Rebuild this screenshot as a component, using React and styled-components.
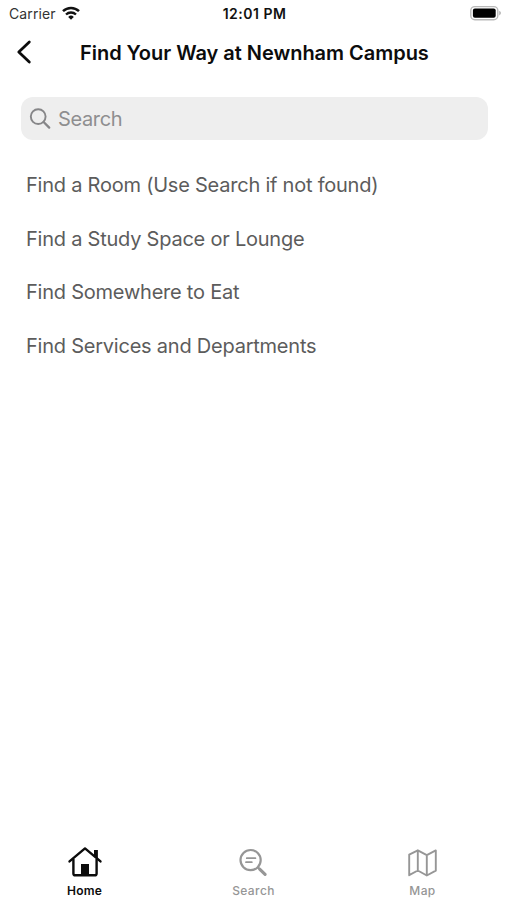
import React from "react";
import styled, { createGlobalStyle } from "styled-components";

const GlobalStyle = createGlobalStyle`
  body {
    margin: 0;
    background: #ffffff;
    font-family: Inter, "Liberation Sans", sans-serif;
  }
`;

const Screen = styled.div`
  display: flex;
  flex-direction: column;
  width: 507px;
  height: 900px;
  overflow: hidden;
  background: #ffffff;
`;

const Icon = styled.svg`
  display: block;
  flex: none;
  overflow: visible;
`;

const StatusBar = styled.div`
  display: grid;
  grid-template-columns: 1fr auto 1fr;
  align-items: center;
  height: 27px;
  padding: 0 6px 0 9px;
  box-sizing: border-box;
  color: #111111;
`;

const Carrier = styled.div`
  display: flex;
  align-items: center;
  gap: 6px;
  font-size: 14px;
  letter-spacing: 0.1px;
  color: #333333;
`;

const Clock = styled.div`
  font-size: 14px;
  font-weight: 600;
  letter-spacing: 0.5px;
  margin-right: 1px;
`;

const Battery = styled.div`
  display: flex;
  justify-content: flex-end;
`;

const Header = styled.header`
  display: flex;
  align-items: center;
  height: 50px;
  padding-left: 17px;
`;

const Title = styled.h1`
  margin: 1px 0 0 49px;
  font-size: 20px;
  font-weight: 600;
  line-height: 26px;
  letter-spacing: -0.03px;
  white-space: nowrap;
  color: #0c0c0c;
`;

const SearchBox = styled.div`
  display: flex;
  align-items: center;
  gap: 7px;
  height: 43px;
  margin: 20px 19px 0 21px;
  padding-left: 9px;
  border-radius: 12px;
  background: #eeeeee;
  font-size: 20px;
  letter-spacing: -0.35px;
  color: #8e8e90;
`;

const List = styled.ul`
  flex: 1;
  margin: 18px 0 0;
  padding: 0 0 0 26px;
  list-style: none;
`;

const ListItem = styled.li`
  display: flex;
  align-items: center;
  height: 53.8px;
  font-size: 20px;
  white-space: nowrap;
  letter-spacing: -0.23px;
  color: #5c5c5c;
`;

const TabBar = styled.nav`
  display: grid;
  grid-template-columns: repeat(3, 1fr);
  height: 56px;
`;

const Tab = styled.div`
  display: flex;
  flex-direction: column;
  align-items: center;
  gap: 3px;
  font-size: 12px;
  font-weight: ${({ $active }) => ($active ? 600 : 500)};
  line-height: 15px;
  letter-spacing: ${({ $active }) => ($active ? "0.2px" : "0.4px")};
  color: ${({ $active }) => ($active ? "#0c0c0c" : "#969696")};
`;

const WifiIcon = () => (
  <Icon width="18" height="14" viewBox="0 0 18 14" fill="none" stroke="#111111">
    <path d="M1 4.2a11.6 11.6 0 0 1 16 0" strokeWidth="2.5" />
    <path d="M4 7.5a7.2 7.2 0 0 1 10 0" strokeWidth="2.3" />
    <path d="M9 12.7 6.2 9.9a4.1 4.1 0 0 1 5.6 0z" fill="#111111" stroke="none" />
  </Icon>
);

const BatteryIcon = () => (
  <Icon width="31" height="15" viewBox="0 0 31 15">
    <rect x="0.8" y="0.6" width="27" height="13.2" rx="4" fill="#ffffff" stroke="#b9b9b9" strokeWidth="1.4" />
    <rect x="2.9" y="2.6" width="22.8" height="9.2" rx="2" fill="#000000" />
    <path d="M29.2 4.8q1.8.8 1.8 2.3t-1.8 2.3z" fill="#b5b5b5" />
  </Icon>
);

const BackIcon = () => (
  <Icon width="14" height="24" viewBox="0 0 14 24" fill="none" stroke="#0c0c0c" strokeWidth="2.8">
    <path d="M12.3 2 1.8 12l10.5 10" strokeLinecap="round" strokeLinejoin="round" />
  </Icon>
);

const SearchIcon = () => (
  <Icon width="21" height="21" viewBox="0 0 21 21" fill="none" stroke="#868688" strokeWidth="1.9">
    <circle cx="8.2" cy="8.6" r="7.4" />
    <path d="m13.6 14 5.6 5.6" strokeWidth="2.3" strokeLinecap="round" />
  </Icon>
);

const HomeTabIcon = () => (
  <Icon width="34" height="36" viewBox="0 0 34 36" fill="none" stroke="currentColor" strokeWidth="2.4">
    <path d="M1.5 17.4 17 4.4l15.5 13" strokeLinecap="round" strokeLinejoin="round" />
    <path d="M5.4 15v14.4q0 1.9 1.9 1.9h19.4q1.9 0 1.9-1.9V15" />
    <path d="M13 20h8v11h-8z" fill="currentColor" stroke="none" />
    <path d="M26 6h3.9v9L26 11.5z" fill="currentColor" stroke="none" />
  </Icon>
);

const SearchTabIcon = () => (
  <Icon width="34" height="36" viewBox="0 0 34 36" fill="none" stroke="currentColor" strokeWidth="2.2">
    <circle cx="13.6" cy="16.1" r="10.1" />
    <path d="m20.8 23.3 1.8 1.8" />
    <path d="m22.9 25.3 5.2 5" strokeWidth="3.2" strokeLinecap="round" />
    <path d="M9.8 14.2h8.6M9 18.2h5.8" strokeWidth="1.8" strokeLinecap="round" />
  </Icon>
);

const MapTabIcon = () => (
  <Icon width="34" height="36" viewBox="0 0 34 36" fill="none" stroke="currentColor" strokeWidth="1.9">
    <path
      d="M3.2 10.6 11.8 6.3l9 4.8 9-4.7v20.3l-9 4.8-9-5-8.6 4.7zM11.8 6.3v20.2M20.8 11.1v20.4"
      strokeLinejoin="round"
    />
  </Icon>
);

const App = () => {
  return (
    <>
      <GlobalStyle />
      <Screen>
        <StatusBar>
          <Carrier>
            <span>Carrier</span>
            <WifiIcon />
          </Carrier>
          <Clock>12:01 PM</Clock>
          <Battery>
            <BatteryIcon />
          </Battery>
        </StatusBar>
        <Header>
          <BackIcon />
          <Title>Find Your Way at Newnham Campus</Title>
        </Header>
        <SearchBox>
          <SearchIcon />
          <span>Search</span>
        </SearchBox>
        <List>
          <ListItem>Find a Room (Use Search if not found)</ListItem>
          <ListItem>Find a Study Space or Lounge</ListItem>
          <ListItem>Find Somewhere to Eat</ListItem>
          <ListItem>Find Services and Departments</ListItem>
        </List>
        <TabBar>
          <Tab $active>
            <HomeTabIcon />
            <span>Home</span>
          </Tab>
          <Tab>
            <SearchTabIcon />
            <span>Search</span>
          </Tab>
          <Tab>
            <MapTabIcon />
            <span>Map</span>
          </Tab>
        </TabBar>
      </Screen>
    </>
  );
};

export default App;
